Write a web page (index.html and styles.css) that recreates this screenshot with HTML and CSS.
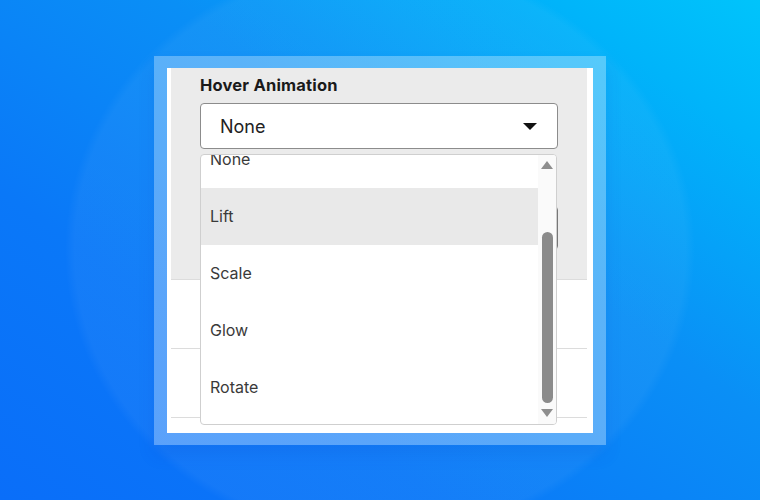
FILE: index.html
```html
<!DOCTYPE html>
<html lang="en">
<head>
  <meta charset="UTF-8">
  <title>Hover Animation</title>
  <link rel="stylesheet" href="styles.css">
</head>
<body>
  <div class="stage">
    <div class="frame">
      <div class="card">
        <div class="panel">
          <label class="field-label">Hover Animation</label>
          <div class="select-wrap">
            <div class="select">
              <span>None</span>
              <span class="caret"></span>
            </div>

            <div class="hidden-field"></div>

            <!-- open option list -->
            <div class="menu">
              <ul class="options">
                <li>None</li>
                <li class="active">Lift</li>
                <li>Scale</li>
                <li>Glow</li>
                <li>Rotate</li>
              </ul>
              <div class="scrollbar">
                <span class="arrow up"></span>
                <span class="track"><span class="thumb"></span></span>
                <span class="arrow down"></span>
              </div>
            </div>
          </div>
        </div>
        <div class="row"></div>
        <div class="row"></div>
      </div>
    </div>
  </div>
</body>
</html>
```

FILE: styles.css
```css
html, body {
  margin: 0;
  height: 100%;
}
body {
  font-family: Inter, 'Open Sans', sans-serif;
  background:
    radial-gradient(ellipse 315px 290px at 380px 250px, rgba(255,255,255,0.045) 97%, rgba(255,255,255,0) 100%),
    linear-gradient(215deg, #00c4fb 0%, #00b4fa 14%, #0a8ff6 40%, #0a78f8 70%, #0a6ef9 100%);
  overflow: hidden;
}
.stage {
  height: 500px;
  display: flex;
  align-items: flex-start;
  justify-content: center;
  padding-top: 56px;
  box-sizing: border-box;
}
.frame {
  width: 452px;
  height: 389px;
  box-sizing: border-box;
  padding: 12px 13px;
  background: rgba(255,255,255,0.3);
  box-shadow: 0 10px 16px rgba(0,60,200,0.12);
}
.card {
  height: 365px;
  background: #fff;
  padding: 0 6px 0 4px;
  box-sizing: border-box;
}
.panel {
  height: 212px;
  box-sizing: border-box;
  background: #ebebeb;
  border-bottom: 1px solid #dcdcdc;
  padding: 7px 29px 0 29px;
}
.field-label {
  display: block;
  font-size: 16.5px;
  font-weight: 700;
  color: #1a1a1a;
  line-height: 20px;
  margin-bottom: 8px;
  letter-spacing: 0.2px;
}
.select-wrap {
  position: relative;
}
.select {
  height: 46px;
  box-sizing: border-box;
  border: 1px solid #8c8c8c;
  border-radius: 4px;
  background: #fff;
  display: flex;
  align-items: center;
  justify-content: space-between;
  padding: 0 20px 0 19px;
  font-size: 18px;
  color: #222;
}
.caret {
  width: 0;
  height: 0;
  border-left: 7px solid transparent;
  border-right: 7px solid transparent;
  border-top: 7px solid #111;
}
.hidden-field {
  margin-top: 57px;
  height: 42px;
  border: 1px solid #777;
  border-radius: 4px;
  background: #fff;
}
.menu {
  position: absolute;
  top: 51px;
  left: 0;
  width: 357px;
  height: 271px;
  box-sizing: border-box;
  border: 1px solid #cfcfcf;
  border-radius: 4px;
  background: #fff;
  overflow: hidden;
  display: flex;
}
.options {
  list-style: none;
  margin: -24px 0 0 0;
  padding: 0;
  flex: 1;
}
.options li {
  height: 57px;
  line-height: 57px;
  padding-left: 9px;
  font-size: 16px;
  color: #3a3a3a;
}
.options li.active {
  background: #e9e9e9;
}
.scrollbar {
  width: 18px;
  background: #fafafa;
  display: flex;
  flex-direction: column;
  align-items: center;
  padding: 6px 0 7px;
  box-sizing: border-box;
}
.arrow {
  width: 0;
  height: 0;
  border-left: 6px solid transparent;
  border-right: 6px solid transparent;
}
.arrow.up {
  border-bottom: 8px solid #8e8e8e;
}
.arrow.down {
  border-top: 8px solid #8e8e8e;
}
.track {
  flex: 1;
  width: 11px;
  display: flex;
  flex-direction: column;
  justify-content: flex-end;
  padding: 0 0 6px;
}
.thumb {
  height: 171px;
  border-radius: 6px;
  background: #8b8b8b;
}
.row {
  height: 68px;
  border-bottom: 1px solid #dcdcdc;
}
```
